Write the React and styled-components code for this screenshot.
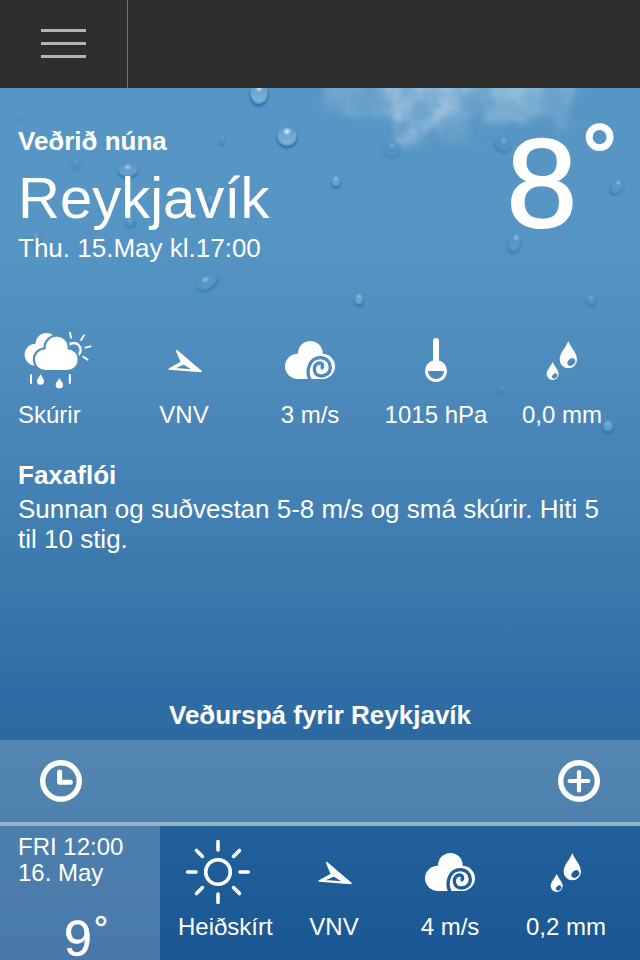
import { useId } from 'react'
import styled, { createGlobalStyle } from 'styled-components'

const GlobalStyle = createGlobalStyle`
  * {
    box-sizing: border-box;
  }
  body {
    margin: 0;
    font-family: "Liberation Sans", Helvetica, Arial, sans-serif;
    color: #fff;
  }
`

const Screen = styled.div`
  position: relative;
  display: flex;
  flex-direction: column;
  width: 640px;
  height: 960px;
  overflow: hidden;
  background: linear-gradient(
    #5796c4 0,
    #5796c4 210px,
    #5090bf 320px,
    #4985b7 440px,
    #3c7aae 570px,
    #2f6ca5 695px,
    #2b699f 740px,
    #21609a 830px,
    #1a5794 960px
  );
`

const Rain = styled.svg`
  position: absolute;
  top: 88px;
  left: 0;
`

const Header = styled.header`
  display: flex;
  flex: none;
  height: 88px;
  background: #2f2e2c;
`

const MenuButton = styled.button`
  display: flex;
  flex-direction: column;
  gap: 10px;
  width: 128px;
  padding: 29px 41px;
  border: 0;
  border-right: 1px solid #747472;
  background: none;
`

const Bar = styled.span`
  width: 45px;
  height: 3px;
  background: #b4b4b2;
`

const Now = styled.section`
  position: relative;
  display: flex;
  flex-direction: column;
  height: 652px;
`

const Top = styled.div`
  display: flex;
  justify-content: space-between;
  height: 240px;
  padding: 38px 22px 0 18px;
`

const Heading = styled.h2`
  margin: 0;
  font-size: 26px;
  line-height: 30px;
  text-align: ${(props) => (props.$center ? 'center' : 'left')};
`

const City = styled.h1`
  margin: 12px 0 5px;
  font-size: 58px;
  font-weight: normal;
  line-height: 60px;
`

const Text = styled.p`
  margin: 0;
  font-size: 26px;
  line-height: 30px;
`

const Temperature = styled.div`
  display: flex;
  align-items: flex-start;
  font-size: ${(props) => props.$size}px;
  line-height: ${(props) => props.$line}px;
  -webkit-text-stroke: ${(props) => props.$stroke || 0}px #fff;
`

const Degree = styled.span`
  margin-left: ${(props) => props.$left}px;
  margin-top: ${(props) => props.$top}px;
  font-size: ${(props) => props.$size}px;
  line-height: 1;
`

const Row = styled.div`
  display: flex;
`

const Cell = styled.div`
  display: flex;
  flex-direction: column;
  align-items: ${(props) => (props.$first ? 'flex-start' : 'center')};
  gap: 9px;
  width: ${(props) => props.$width}px;
  padding-left: ${(props) => props.$pad || 0}px;
`

const Label = styled.span`
  font-size: 24px;
  line-height: 28px;
  white-space: nowrap;
`

const Icon = styled.svg`
  display: block;
  flex: none;
`

const Area = styled.div`
  padding: 31px 30px 0 18px;
`

const AreaTitle = styled(Heading)`
  margin-bottom: 4px;
`

const ForecastTitle = styled(Heading)`
  margin-top: auto;
  padding-bottom: 10px;
`

const Toolbar = styled.div`
  position: relative;
  display: flex;
  flex: none;
  justify-content: space-between;
  align-items: center;
  height: 86px;
  padding: 0 40px;
  border-bottom: 4px solid rgba(255, 255, 255, 0.4);
  background: rgba(255, 255, 255, 0.2);
`

const RoundButton = styled.button`
  padding: 0;
  border: 0;
  background: none;
`

const Forecast = styled.section`
  position: relative;
  display: flex;
  height: 134px;
`

const When = styled.div`
  width: 160px;
  padding: 8px 0 0 18px;
  font-size: 24px;
  line-height: 26px;
  background: rgba(255, 255, 255, 0.2);
`

const Small = styled.div`
  padding: 33px 0 0 46px;
`

const ForecastRow = styled(Row)`
  padding-top: 14px;
`

const ShowersIcon = () => {
  const id = useId()
  const cloud = (
    <>
      <circle cx="136" cy="119" r="31" />
      <circle cx="170" cy="83" r="33" />
      <circle cx="202" cy="119" r="31" />
      <rect x="136" y="100" width="66" height="50" />
    </>
  )
  return (
    <Icon width="80" height="64">
      <g transform="translate(-18 -8) scale(.33333)" fill="#fff">
        <mask id={id} maskUnits="userSpaceOnUse" x="40" y="0" width="260" height="220">
          <rect x="40" y="0" width="260" height="220" fill="#fff" />
          <g fill="#000" stroke="#000" strokeWidth="13">{cloud}</g>
        </mask>
        <g mask={`url(#${id})`}>
          <circle cx="139" cy="71" r="32" />
          <circle cx="107" cy="104" r="33" />
          <circle cx="221" cy="90" r="21" fill="none" stroke="#fff" strokeWidth="7" />
        </g>
        {cloud}
        <path
          d="M210 38l3 15M252 46l-9 14M256 83l16-4M250 110l13 9"
          stroke="#fff"
          strokeWidth="5.500"
          strokeLinecap="round"
        />
        <path d="M93 163v28M209.500 163v28" stroke="#fff" strokeWidth="6" />
        <path d="M122 163C126 172 132 177 132 184A10.500 10.500 0 0 1 111 184C111 177 118 172 122 163Z" />
        <path d="M178 174C182 183 189 187 189 194A11 11 0 0 1 167 194C167 187 174 183 178 174Z" />
      </g>
    </Icon>
  )
}

const ArrowIcon = () => (
  <Icon width="80" height="64">
    <path
      transform="translate(-144 -8) scale(.33333)"
      fill="#fff"
      stroke="#fff"
      strokeWidth="5"
      strokeLinejoin="round"
      fillRule="evenodd"
      d="M530 92L603 154L508 147L545 127ZM518 146L551 131L583 151Z"
    />
  </Icon>
)

const WindIcon = () => {
  const id = useId()
  return (
    <Icon width="80" height="64">
      <g transform="translate(-50 -8) scale(.33333)">
        <mask id={id} maskUnits="userSpaceOnUse" x="180" y="50" width="180" height="140">
          <rect x="180" y="50" width="180" height="140" fill="#fff" />
          <path
            d="M271 182C255 150 270 113 301 113C321 113 331 128 331 142C331 159 318 168 304 168C290 168 283 158 283 147C283 136 291 128 300 129C309 130 311 143 302 145"
            fill="none"
            stroke="#000"
            strokeWidth="10"
          />
        </mask>
        <g mask={`url(#${id})`} fill="#fff">
          <circle cx="233" cy="139" r="38" />
          <circle cx="271" cy="100" r="37" />
          <circle cx="307" cy="139" r="38" />
          <rect x="233" y="101" width="74" height="76" />
        </g>
      </g>
    </Icon>
  )
}

const PressureIcon = () => (
  <Icon width="80" height="64" fill="#fff">
    <path
      fillRule="evenodd"
      d="M37 13a3 3 0 0 1 6 0V32.500A11 11 0 1 1 37 32.500ZM32 43A8 8 0 0 0 48 43Z"
    />
  </Icon>
)

const DropsIcon = () => {
  const id = useId()
  return (
    <Icon width="80" height="64">
      <g transform="translate(-92 -8) scale(.33333)">
        <mask id={id} maskUnits="userSpaceOnUse" x="340" y="50" width="120" height="140">
          <rect x="340" y="50" width="120" height="140" fill="#fff" />
          <ellipse cx="424" cy="126" rx="13" ry="10" transform="rotate(-45 424 126)" />
          <ellipse cx="374" cy="168" rx="9" ry="6.500" transform="rotate(-45 374 168)" />
        </mask>
        <g mask={`url(#${id})`} fill="#fff">
          <path d="M415 63C424 86 441 98 441 119A26 26 0 0 1 389 119C389 98 406 86 415 63Z" />
          <path d="M368 125C374 141 386 149 386 162A18 18 0 0 1 350 162C350 149 362 141 368 125Z" />
        </g>
      </g>
    </Icon>
  )
}

const SunIcon = () => (
  <Icon width="80" height="64" fill="none" stroke="#fff">
    <circle cx="40" cy="32" r="12.300" strokeWidth="3.600" />
    {[0, 45, 90, 135, 180, 225, 270, 315].map((angle) => (
      <path
        key={angle}
        d="M40 1.600V10"
        strokeWidth="3.600"
        strokeLinecap="round"
        transform={`rotate(${angle} 40 32)`}
      />
    ))}
  </Icon>
)

const ClockIcon = () => (
  <Icon width="42" height="42" fill="none" stroke="#fff">
    <circle cx="21" cy="21" r="18.300" strokeWidth="5.400" />
    <path d="M19.600 12V22.300H30.300" strokeWidth="5" strokeLinecap="round" strokeLinejoin="round" />
  </Icon>
)

const PlusIcon = () => (
  <Icon width="42" height="42" fill="none" stroke="#fff">
    <circle cx="21" cy="21" r="18.300" strokeWidth="5.400" />
    <path d="M21 12V30.500M11.700 21H30.300" strokeWidth="4.200" strokeLinecap="round" />
  </Icon>
)

// x, y, rx, ry, rotation, strength
const drops = [
  [259, 5, 9, 11, 0, 1],
  [287, 48, 10, 10, 0, 1],
  [222, 52, 2.5, 4, 0, 0.5],
  [21, 29, 4, 5, 0, 0.15],
  [76, 76, 5, 6, 0, 0.3],
  [128, 82, 10, 6.5, -5, 0.8],
  [130, 134, 5, 4, -20, 0.6],
  [210, 112, 4, 5, 0, 0.6],
  [36, 150, 5, 6, 0, 0.4],
  [207, 194, 12, 6.5, -30, 0.6],
  [336, 93, 4.5, 5.5, 0, 0.85],
  [359, 211, 4.5, 5.5, 0, 0.85],
  [392, 61, 9, 8, 0, 0.35],
  [503, 56, 9, 7, 20, 0.45],
  [515, 154, 6, 10, 15, 0.65],
  [617, 98, 6, 8, 25, 0.6],
  [591, 212, 5, 5, 0, 0.5],
  [502, 301, 4, 4, 0, 0.3],
  [608, 338, 5.5, 5.5, 0, 0.75],
]

const Backdrop = () => (
  <Rain width="640" height="400" viewBox="0 0 640 400">
    <defs>
      <linearGradient id="drop" x1="0" y1="0" x2="0" y2="1">
        <stop offset="0" stopColor="#fff" stopOpacity=".04" />
        <stop offset="1" stopColor="#d8efff" stopOpacity=".42" />
      </linearGradient>
      <filter id="soft" x="-50%" y="-50%" width="200%" height="200%">
        <feGaussianBlur stdDeviation=".9" />
      </filter>
      <filter id="cloud" x="-20%" y="-40%" width="140%" height="180%">
        <feTurbulence type="fractalNoise" baseFrequency=".03" numOctaves="5" seed="8" result="noise" />
        <feColorMatrix in="noise" values="0 0 0 0 1  0 0 0 0 1  0 0 0 0 1  3 0 0 0 -.8" result="wisps" />
        <feGaussianBlur in="SourceGraphic" stdDeviation="6" />
        <feDisplacementMap in2="noise" scale="44" xChannelSelector="R" yChannelSelector="G" result="edge" />
        <feComposite in="edge" in2="wisps" operator="arithmetic" k1=".75" k2=".4" />
        <feGaussianBlur stdDeviation="1.200" />
      </filter>
    </defs>
    <g fill="#e4f0fb" filter="url(#cloud)">
      <path d="M310 -20H590L578 6L570 30L560 44L544 32L504 28L488 42L470 30L460 54L436 44L408 64L388 40L372 28L344 14L322 14Z" opacity=".17" />
      <path d="M380 -20H476L468 10L448 28L432 40L412 62L398 34L386 8Z" opacity=".3" />
      <path d="M466 -20H580L566 10L544 18L518 24L490 42L476 26Z" opacity=".22" />
    </g>
    {drops.map(([x, y, rx, ry, angle, strength]) => (
      <g key={`${x}-${y}`} transform={`translate(${x} ${y}) rotate(${angle})`}>
        <ellipse cy="2" rx={rx + 0.5} ry={ry + 0.5} fill="#1f70ae" opacity={strength * 0.85} filter="url(#soft)" />
        <ellipse cy="-1" rx={rx * 0.92} ry={ry * 0.9} fill="#5796c4" opacity={0.2 + strength * 0.7} filter={strength < 0.7 ? 'url(#soft)' : undefined} />
        <ellipse rx={rx} ry={ry} fill="url(#drop)" opacity={strength * strength * 0.9} />
        <ellipse cy={-ry * 0.45} rx={rx * 0.28} ry={ry * 0.24} fill="#e6f4ff" opacity={strength * 0.9} filter="url(#soft)" />
      </g>
    ))}
  </Rain>
)

const current = [
  { icon: ShowersIcon, label: 'Skúrir' },
  { icon: ArrowIcon, label: 'VNV' },
  { icon: WindIcon, label: '3 m/s' },
  { icon: PressureIcon, label: '1015 hPa' },
  { icon: DropsIcon, label: '0,0 mm' },
]

const next = [
  { icon: SunIcon, label: 'Heiðskírt' },
  { icon: ArrowIcon, label: 'VNV' },
  { icon: WindIcon, label: '4 m/s' },
  { icon: DropsIcon, label: '0,2 mm' },
]

const App = () => {
  return (
    <Screen>
      <GlobalStyle />
      <Backdrop />
      <Header>
        <MenuButton type="button">
          <Bar />
          <Bar />
          <Bar />
        </MenuButton>
      </Header>
      <Now>
        <Top>
          <div>
            <Heading>Veðrið núna</Heading>
            <City>Reykjavík</City>
            <Text>Thu. 15.May kl.17:00</Text>
          </div>
          <Temperature $size={127} $line={115} $stroke={2}>
            8<Degree $size={92} $left={4} $top={-15}>°</Degree>
          </Temperature>
        </Top>
        <Row>
          {current.map(({ icon: Glyph, label }, i) => (
            <Cell key={label} $first={i === 0} $pad={i === 0 ? 18 : 0} $width={i === 0 ? 121 : 126}>
              <Glyph />
              <Label>{label}</Label>
            </Cell>
          ))}
        </Row>
        <Area>
          <AreaTitle>Faxaflói</AreaTitle>
          <Text>Sunnan og suðvestan 5-8 m/s og smá skúrir. Hiti 5 til 10 stig.</Text>
        </Area>
        <ForecastTitle $center>Veðurspá fyrir Reykjavík</ForecastTitle>
      </Now>
      <Toolbar>
        <RoundButton type="button">
          <ClockIcon />
        </RoundButton>
        <RoundButton type="button">
          <PlusIcon />
        </RoundButton>
      </Toolbar>
      <Forecast>
        <When>
          FRI 12:00
          <br />
          16. May
          <Small>
            <Temperature $size={50} $line={40} $stroke={0.4}>
              9<Degree $size={36} $left={2} $top={-7}>°</Degree>
            </Temperature>
          </Small>
        </When>
        <ForecastRow>
          {next.map(({ icon: Glyph, label }, i) => (
            <Cell key={label} $first={i === 0} $pad={i === 0 ? 18 : 0} $width={116}>
              <Glyph />
              <Label>{label}</Label>
            </Cell>
          ))}
        </ForecastRow>
      </Forecast>
    </Screen>
  )
}

export default App
